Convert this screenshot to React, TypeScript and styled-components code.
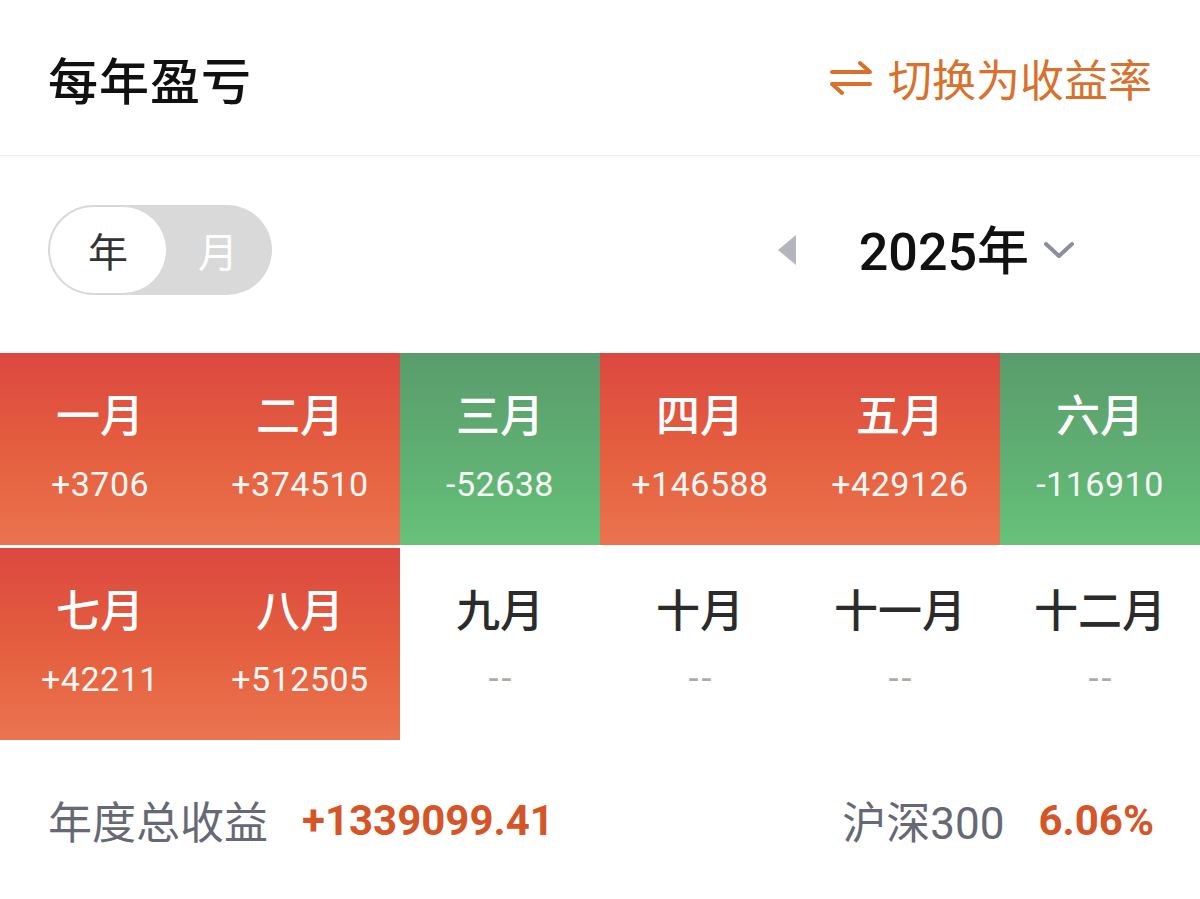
import React from "react";
import styled, { createGlobalStyle, css } from "styled-components";

const GlobalStyle = createGlobalStyle`
  body {
    margin: 0;
    background: #fff;
    font-family: "Noto Sans CJK SC", "Noto Sans", sans-serif;
  }
`;

const Page = styled.div`
  width: 1200px;
  background: #fff;
`;

const Header = styled.div`
  height: 155px;
  display: flex;
  align-items: center;
  justify-content: space-between;
  padding: 0 48px 0 48px;
  border-bottom: 1px solid #ececec;
`;

const Title = styled.div`
  font-size: 50px;
  font-weight: 500;
  color: #111;
  letter-spacing: 1px;
`;

const SwitchLink = styled.div`
  display: flex;
  align-items: center;
  gap: 14px;
  color: #d9702c;
  font-size: 44px;
`;

const Controls = styled.div`
  height: 196px;
  display: flex;
  align-items: center;
  justify-content: space-between;
  padding: 0 125px 8px 48px;
  box-sizing: border-box;
`;

const Toggle = styled.div`
  width: 224px;
  height: 90px;
  border-radius: 45px;
  background: #d9d9d9;
  display: flex;
  align-items: center;
  padding: 2px;
  box-sizing: border-box;
`;

const ToggleItem = styled.div<{ $active?: boolean }>`
  width: ${(p) => (p.$active ? "116px" : "104px")};
  height: 86px;
  border-radius: 43px;
  display: flex;
  align-items: center;
  justify-content: center;
  font-size: 40px;
  color: #fff;
  ${(p) =>
    p.$active &&
    css`
      background: #fff;
      color: #333;
    `}
`;

const YearPicker = styled.div`
  display: flex;
  align-items: center;
`;

const YearText = styled.div`
  font-size: 52px;
  font-weight: 500;
  line-height: 60px;
  color: #111;
  margin: 0 14px 0 62px;
  font-family: Roboto, "Noto Sans CJK SC", sans-serif;
  span {
    font-family: "Noto Sans CJK SC", sans-serif;
  }
`;

const Grid = styled.div`
  display: grid;
  grid-template-columns: repeat(6, 1fr);
  row-gap: 3px;
  margin-top: 1px;
`;

const Cell = styled.div<{ $tone: "up" | "down" | "none" }>`
  height: 192px;
  display: flex;
  flex-direction: column;
  align-items: center;
  padding-top: 32px;
  box-sizing: border-box;
  ${(p) =>
    p.$tone === "up" &&
    css`
      background: linear-gradient(180deg, #dc4840 0%, #e5603f 55%, #eb744f 100%);
      color: #fff;
    `}
  ${(p) =>
    p.$tone === "down" &&
    css`
      background: linear-gradient(180deg, #5a9c6c 0%, #60b173 60%, #66c27a 100%);
      color: #fff;
    `}
  ${(p) =>
    p.$tone === "none" &&
    css`
      color: #2b2b2b;
    `}
`;

const MonthLabel = styled.div`
  font-size: 44px;
  font-weight: 500;
  line-height: 56px;
`;

const MonthValue = styled.div<{ $empty?: boolean }>`
  margin-top: 22px;
  font-family: Roboto, "Noto Sans", sans-serif;
  font-size: 34px;
  line-height: 42px;
  letter-spacing: 0.5px;
  opacity: 0.95;
  ${(p) =>
    p.$empty &&
    css`
      color: #a6a6a6;
      font-size: 36px;
      letter-spacing: 3px;
      margin-left: 3px;
    `}
`;

const Footer = styled.div`
  height: 160px;
  display: flex;
  align-items: center;
  justify-content: space-between;
  padding: 0 46px 0 48px;
`;

const Stat = styled.div`
  display: flex;
  align-items: center;
  gap: 34px;
`;

const StatLabel = styled.div`
  font-size: 44px;
  color: #666975;
  font-family: "Noto Sans CJK SC", sans-serif;
  b {
    font-weight: 400;
    font-family: Roboto, sans-serif;
  }
`;

const StatValue = styled.div`
  font-family: Roboto, "Noto Sans", sans-serif;
  font-size: 42px;
  font-weight: 700;
  color: #d45628;
`;

const months: { name: string; value?: string }[] = [
  { name: "一月", value: "+3706" },
  { name: "二月", value: "+374510" },
  { name: "三月", value: "-52638" },
  { name: "四月", value: "+146588" },
  { name: "五月", value: "+429126" },
  { name: "六月", value: "-116910" },
  { name: "七月", value: "+42211" },
  { name: "八月", value: "+512505" },
  { name: "九月" },
  { name: "十月" },
  { name: "十一月" },
  { name: "十二月" },
];

const SwapIcon = () => (
  <svg width="46" height="40" viewBox="0 0 46 40" fill="none" stroke="#d9702c" strokeWidth="4" strokeLinecap="round" strokeLinejoin="round">
    <path d="M4 14 H42 L32 5" />
    <path d="M42 26 H4 L14 35" />
  </svg>
);

const LeftArrow = () => (
  <svg width="20" height="32" viewBox="0 0 20 32">
    <path d="M19 1 V31 L1 16 Z" fill="#b3b6bf" />
  </svg>
);

const Chevron = () => (
  <svg width="32" height="20" viewBox="0 0 32 20" fill="none" stroke="#8c8f99" strokeWidth="4" strokeLinecap="round" strokeLinejoin="round">
    <path d="M3 4 L16 16 L29 4" />
  </svg>
);

export default function App() {
  return (
    <Page>
      <GlobalStyle />
      <Header>
        <Title>每年盈亏</Title>
        <SwitchLink>
          <SwapIcon />
          切换为收益率
        </SwitchLink>
      </Header>
      <Controls>
        <Toggle>
          <ToggleItem $active>年</ToggleItem>
          <ToggleItem>月</ToggleItem>
        </Toggle>
        <YearPicker>
          <LeftArrow />
          <YearText>
            2025<span>年</span>
          </YearText>
          <Chevron />
        </YearPicker>
      </Controls>
      <Grid>
        {months.map((m) => {
          const tone = !m.value ? "none" : m.value.startsWith("-") ? "down" : "up";
          return (
            <Cell key={m.name} $tone={tone}>
              <MonthLabel>{m.name}</MonthLabel>
              <MonthValue $empty={!m.value}>{m.value ?? "--"}</MonthValue>
            </Cell>
          );
        })}
      </Grid>
      <Footer>
        <Stat>
          <StatLabel>年度总收益</StatLabel>
          <StatValue>+1339099.41</StatValue>
        </Stat>
        <Stat>
          <StatLabel>
            沪深<b>300</b>
          </StatLabel>
          <StatValue>6.06%</StatValue>
        </Stat>
      </Footer>
    </Page>
  );
}
